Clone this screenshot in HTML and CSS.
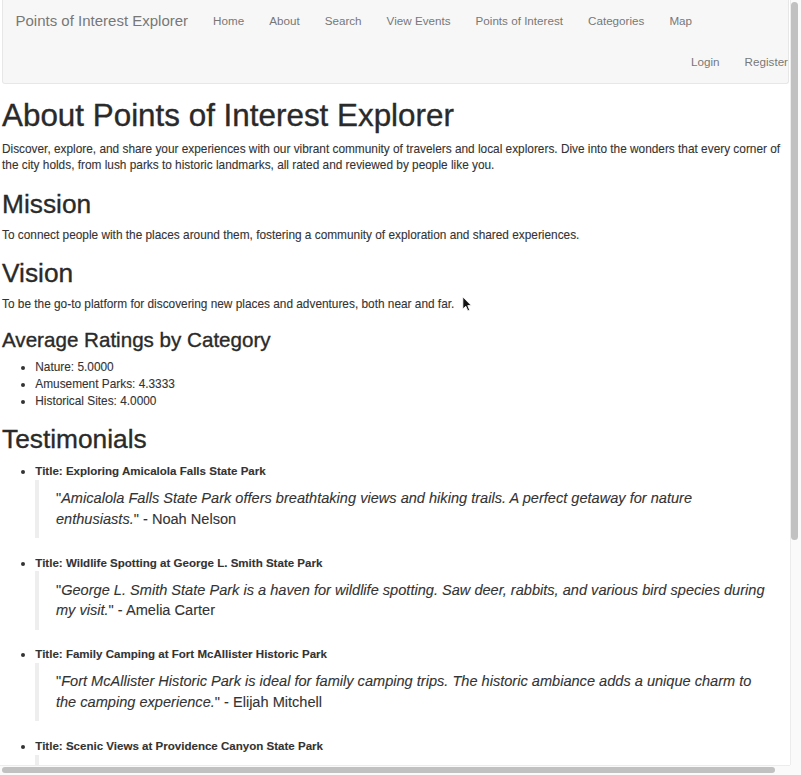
FILE: index.html
```html
<!DOCTYPE html>
<html lang="en">
<head>
<meta charset="utf-8">
<title>About - Points of Interest Explorer</title>
<link rel="stylesheet" href="styles.css">
</head>
<body>
<div class="page">
  <nav class="navbar">
    <a class="brand" href="#">Points of Interest Explorer</a>
    <ul class="nav">
      <li><a href="#">Home</a></li>
      <li><a href="#">About</a></li>
      <li><a href="#">Search</a></li>
      <li><a href="#">View Events</a></li>
      <li><a href="#">Points of Interest</a></li>
      <li><a href="#">Categories</a></li>
      <li><a href="#">Map</a></li>
    </ul>
    <ul class="nav nav-right">
      <li><a href="#">Login</a></li>
      <li><a href="#">Register</a></li>
    </ul>
  </nav>
  <main class="content">
    <h1>About Points of Interest Explorer</h1>
    <p>Discover, explore, and share your experiences with our vibrant community of travelers and local explorers. Dive into the wonders that every corner of the city holds, from lush parks to historic landmarks, all rated and reviewed by people like you.</p>
    <h2>Mission</h2>
    <p>To connect people with the places around them, fostering a community of exploration and shared experiences.</p>
    <h2>Vision</h2>
    <p>To be the go-to platform for discovering new places and adventures, both near and far.</p>
    <h3>Average Ratings by Category</h3>
    <ul class="ratings">
      <li>Nature: 5.0000</li>
      <li>Amusement Parks: 4.3333</li>
      <li>Historical Sites: 4.0000</li>
    </ul>
    <h2>Testimonials</h2>
    <ul class="testimonials">
      <li>
        <strong>Title: Exploring Amicalola Falls State Park</strong>
        <blockquote><p>"<em>Amicalola Falls State Park offers breathtaking views and hiking trails. A perfect getaway for nature enthusiasts.</em>" - Noah Nelson</p></blockquote>
      </li>
      <li>
        <strong>Title: Wildlife Spotting at George L. Smith State Park</strong>
        <blockquote><p>"<em>George L. Smith State Park is a haven for wildlife spotting. Saw deer, rabbits, and various bird species during my visit.</em>" - Amelia Carter</p></blockquote>
      </li>
      <li>
        <strong>Title: Family Camping at Fort McAllister Historic Park</strong>
        <blockquote><p>"<em>Fort McAllister Historic Park is ideal for family camping trips. The historic ambiance adds a unique charm to the camping experience.</em>" - Elijah Mitchell</p></blockquote>
      </li>
      <li>
        <strong>Title: Scenic Views at Providence Canyon State Park</strong>
        <blockquote><p>"<em>Providence Canyon State Park offers stunning views of colorful canyons.</em>"</p></blockquote>
      </li>
    </ul>
  </main>
  <svg class="cursor" width="10" height="16" viewBox="0 0 12 19" aria-hidden="true">
    <path d="M1 1 V15.5 L4.6 12.2 L7 17.8 L9.2 16.8 L6.9 11.4 H11.2 Z" fill="#111" stroke="#fff" stroke-width="1" stroke-linejoin="round"/>
  </svg>
</div>
<div class="vscroll"><div class="vthumb"></div></div>
<div class="hscroll"><div class="hthumb"></div></div>
<div class="corner"></div>
</body>
</html>
```
FILE: styles.css
```css
html, body {
  height: 100%;
}

body {
  margin: 0;
  overflow: hidden;
  display: grid;
  grid-template-columns: minmax(0, 1fr) 11px;
  grid-template-rows: minmax(0, 1fr) 10px;
  font-family: "Liberation Sans", Arial, Helvetica, sans-serif;
  font-size: 11.85px;
  line-height: 16.67px;
  color: #333;
  background: #fff;
}

a {
  text-decoration: none;
}

/* ---------- scroll frame ---------- */
.page {
  position: relative;
  overflow: hidden;
  padding: 0 1px 0 2px;
  -webkit-text-stroke: 0.1px #333;
}

.vscroll {
  background: #fafafa;
  border-left: 1px solid #ececec;
  padding: 2px 2px 0 0;
}

.vthumb {
  width: 7px;
  height: 538px;
  background: #c1c1c1;
  border-radius: 4px;
}

.hscroll {
  background: #fafafa;
  border-top: 1px solid #ececec;
  padding: 1px 0 0 2px;
}

.hthumb {
  width: 773px;
  height: 6px;
  background: #c1c1c1;
  border-radius: 4px;
}

.corner {
  background: #fafafa;
}

/* ---------- navbar ---------- */
.navbar {
  display: flex;
  flex-wrap: wrap;
  align-items: flex-start;
  background: #f7f7f7;
  border: 1px solid #e7e7e7;
  border-top: none;
  border-radius: 0 0 3px 3px;
  margin-bottom: 15px;
  -webkit-text-stroke: 0;
}

.brand {
  display: block;
  padding: 12.5px;
  font-size: 15px;
  line-height: 16.67px;
  color: #777;
}

.nav {
  display: flex;
  list-style: none;
  margin: 0;
  padding: 0;
}

.nav a {
  display: block;
  padding: 12.5px;
  font-size: 11.67px;
  line-height: 16.67px;
  color: #777;
}

.nav-right {
  margin-left: auto;
  margin-right: -12.5px;
}

/* ---------- content ---------- */
.content {
  padding-bottom: 250px;
}

h1, h2, h3 {
  font-weight: 500;
  color: #2a2a2a;
  margin: 16.67px 0 8.33px;
  -webkit-text-stroke: 0.35px #2a2a2a;
}

h1 {
  margin-top: 0;
  font-size: 31.4px;
  line-height: 33px;
}

h2 {
  font-size: 26.3px;
  line-height: 27.5px;
}

h3 {
  font-size: 20.6px;
  line-height: 22px;
}

p {
  margin: 0 0 8.33px;
}

ul {
  margin: 0 0 8.33px;
  padding-left: 33.3px;
}

.testimonials {
  margin-top: 9.5px;
}

.testimonials strong {
  font-weight: 700;
  font-size: 11.55px;
}

blockquote {
  margin: 0 0 16.67px;
  padding: 8.33px 16.67px;
  border-left: 4.2px solid #eee;
  font-size: 14.58px;
  line-height: 20.83px;
}

blockquote p {
  margin: 0;
}

.cursor {
  position: absolute;
  left: 462px;
  top: 296px;
}
```
